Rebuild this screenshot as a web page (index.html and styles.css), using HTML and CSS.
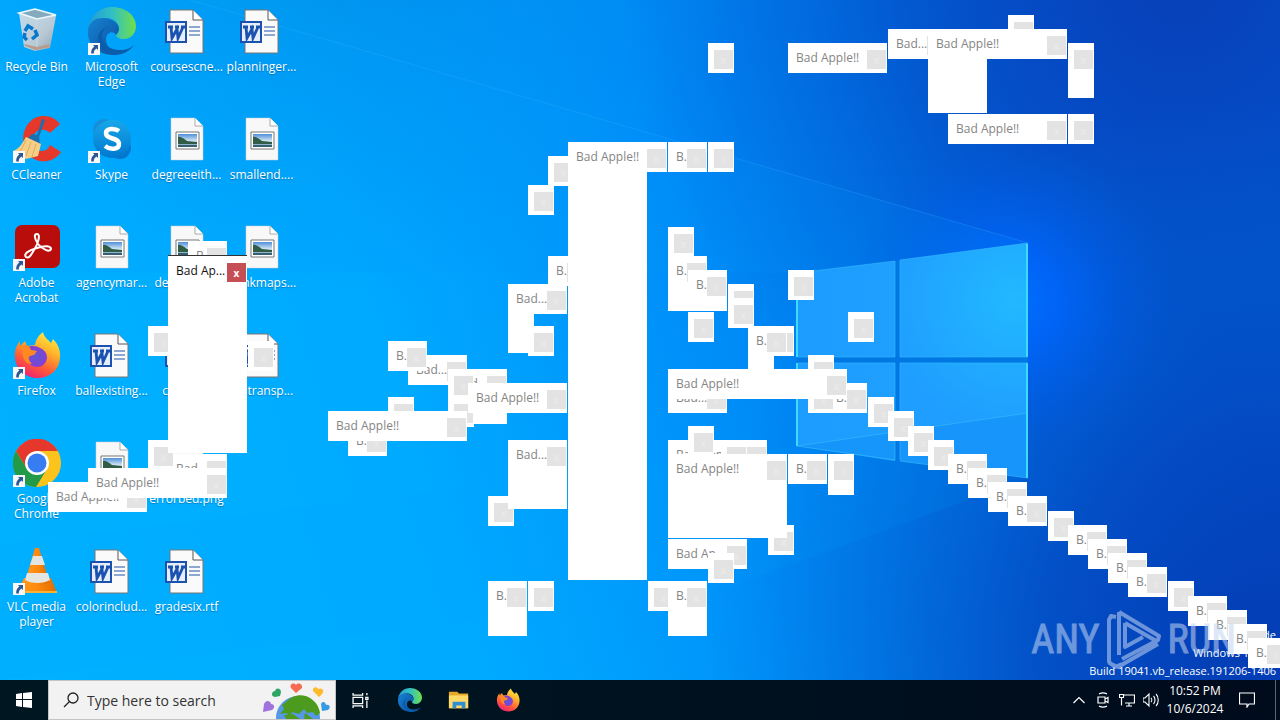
FILE: index.html
```html
<!DOCTYPE html>
<html lang="en">
<head>
<meta charset="utf-8">
<title>Desktop</title>
<link rel="stylesheet" href="styles.css">
</head>
<body>
<svg class="defs" aria-hidden="true">
  <defs>
    <linearGradient id="edgeTop" x1="0" y1="0" x2="1" y2="0"><stop offset="0" stop-color="#229bd8"/><stop offset=".5" stop-color="#31bfc4"/><stop offset="1" stop-color="#70e04a"/></linearGradient>
    <linearGradient id="edgeMid" x1="0" y1="0" x2="1" y2="1"><stop offset="0" stop-color="#1583d2"/><stop offset="1" stop-color="#0c4f9f"/></linearGradient>
    <linearGradient id="ffBody" x1=".8" y1="0" x2=".3" y2="1"><stop offset="0" stop-color="#fff04a"/><stop offset=".35" stop-color="#ffb52a"/><stop offset=".7" stop-color="#ff5b36"/><stop offset="1" stop-color="#ee1f79"/></linearGradient>
    <radialGradient id="ffCore"><stop offset="0" stop-color="#5a58d8"/><stop offset="1" stop-color="#8a3ed0"/></radialGradient>
    <linearGradient id="skypeBody" x1="0" y1="0" x2="0" y2="1"><stop offset="0" stop-color="#18a7e8"/><stop offset="1" stop-color="#0078d0"/></linearGradient>
    <linearGradient id="binBody" x1="0" y1="0" x2="1" y2="1"><stop offset="0" stop-color="#c4dcea"/><stop offset=".6" stop-color="#b9cad6"/><stop offset="1" stop-color="#8fa3b2"/></linearGradient>
    <linearGradient id="coneBody" x1="0" y1="0" x2="1" y2="0"><stop offset="0" stop-color="#ff9a1c"/><stop offset=".5" stop-color="#ff8a10"/><stop offset="1" stop-color="#dd6a00"/></linearGradient>
    <linearGradient id="photoSky" x1="0" y1="0" x2="0" y2="1"><stop offset="0" stop-color="#4f8fd8"/><stop offset=".55" stop-color="#d6e8f4"/><stop offset="1" stop-color="#5c8fa8"/></linearGradient>
  </defs>
  <symbol id="shortcut" viewBox="0 0 12 12"><path d="M0 0h12v12H0z" fill="#f8f8f8"/><path d="M5 2h5v5L8.600 5.600C6.500 6.800 5.800 8 5.800 10.500H3.200C3 7.500 4 5 6.400 3.500z" fill="#2c5797"/></symbol>
  <symbol id="bin" viewBox="0 0 48 48"><path d="M6 6l5 34 11 4 15-3 6-32z" fill="url(#binBody)"/><path d="M6 6l16-4 21 6-19 4z" fill="#84aabd" stroke="#eff8fc" stroke-width="1.500"/><path d="M24 12v31" stroke="#c9d8e1"/><path d="M12 39l11 4 14-3-1-3-12 3-13-3z" fill="#b99b8e"/><g fill="none" stroke="#0878cc" stroke-width="3.500"><path d="M12 24l3-5 5 3M22 23l2 5-5 4M14 33l-3-3 1-4"/></g></symbol>
  <symbol id="edge" viewBox="0 0 48 48"><path d="M0 20C3 8 12 0 24 0c14 0 24 9 24 19 0 7-5 13-12 13-5 0-8-2-8-4 0-1 3-3 3-7 0-5-5-10-13-10-8 0-15 3-18 9z" fill="url(#edgeTop)"/><path d="M0 22c2-8 8-11 15-11 10 0 16 6 16 11 0 3-2 5-3 6-2-5-10-3-10 4 0 8 6 13 13 15C14 51-2 39 0 22z" fill="url(#edgeMid)"/><path d="M14 29c0 8 8 14 18 14 6 0 11-2 14-5-4 6-11 10-20 10-9-2-17-9-16-17 0-6 5-10 12-12-5 2-8 5-8 10z" fill="#0b5cab"/></symbol>
  <symbol id="word" viewBox="4 0 48 48"><path d="M11 3h23l10 10v33H11z" fill="#fafafa" stroke="#777" stroke-width="1"/><path d="M34 3v10h10" fill="#fff" stroke="#555"/><path d="M30 20h11M30 24h11M30 28h11" stroke="#1f55a8" stroke-width="1.200"/><path d="M7 15h20v20H7z" fill="#e7eefb" stroke="#1b52b0" stroke-width="2"/><path d="M9 20h5M16 20h4M22 20h4M12 20l1 11 5-9 1 9 5-11" fill="none" stroke="#1b52b0" stroke-width="2.800"/></symbol>
  <symbol id="photo" viewBox="4 0 48 48"><path d="M12 3h24l8 8v34H12z" fill="#f8f8f8" stroke="#ccc" stroke-width=".500"/><path d="M36 3v8h8" fill="#fff" stroke="#aaa"/><path d="M17 17h23v17H17z" fill="#fff" stroke="#777"/><path d="M19 19h19v13H19z" fill="url(#photoSky)"/><path d="M19 22c3-1 6 2 9 4l10 1v2H19z" fill="#315d46"/><path d="M19 30h19v2H19z" fill="#385e73"/></symbol>
  <symbol id="ccleaner" viewBox="0 0 48 48"><path d="M47 9L37 18c-6-6-15-3-17 4-2 8 2 14 9 14 4 0 7-3 8-6l11 7C41 48 24 50 15 39 4 23 13 1 31 1c7 0 12 3 16 8z" fill="#e6372b"/><path d="M29 4l3 1-6 17 1 7-14-4 6-6 5 1z" fill="#1e6fae"/><path d="M13 22l15 7-3 12-12 3L0 36c6-2 9-7 13-14z" fill="#f5cf86"/><path d="M13 25L7 37m11-10l-5 14m10-12l-4 13" stroke="#e2aa5c"/></symbol>
  <symbol id="skype" viewBox="0 0 48 48"><circle cx="16" cy="15" r="11" fill="#168fd8"/><circle cx="32" cy="33" r="11" fill="#0577ce"/><circle cx="24" cy="24" r="19" fill="url(#skypeBody)"/><path d="M31 16c-4-3-13-3-13 2 0 7 13 4 13 11 0 6-9 6-14 2" fill="none" stroke="#fff" stroke-width="4.500"/></symbol>
  <symbol id="acrobat" viewBox="0 0 48 48"><rect x="2" y="2" width="45" height="43" rx="7" fill="#b80d0b"/><path d="M13 34c-3-3 3-7 11-9 8-3 14-2 14 1-1 4-9 0-13-5-4-6-4-10-1-10 4 0 1 10-3 16-3 5-5 9-8 7z" fill="none" stroke="#fff" stroke-width="2"/></symbol>
  <symbol id="firefox" viewBox="0 0 48 48"><path d="M30 1c1 6 6 8 8 11l2-4c5 5 8 12 7 19-1 12-10 20-22 20S3 39 2 27C1 19 4 14 7 10v5l5-5 2 5 8-1c1-6 4-10 8-13z" fill="url(#ffBody)"/><path d="M13 17c5-3 11-2 14 0 5 2 7 6 7 10-1 6-5 9-10 9-6 0-10-5-9-10l8-3z" fill="url(#ffCore)"/><path d="M7 15c6-2 10 0 11 4l6 1c-1 3-7 3-8 6-1 2 1 5 3 7-8 0-10-8-9-13z" fill="#ff8a22"/></symbol>
  <symbol id="chrome" viewBox="0 0 48 48"><circle cx="24" cy="24" r="24" fill="#fcc31c"/><path d="M3 12a24 24 0 0 1 42 0H24L14 30z" fill="#e5372b"/><path d="M3 12a24 24 0 0 0 20 36l11-18-10 6-10-6z" fill="#229a48"/><circle cx="24" cy="24" r="12" fill="#fff"/><circle cx="24" cy="24" r="9.500" fill="#377cf0"/></symbol>
  <symbol id="vlc" viewBox="0 0 48 48"><path d="M11 31h27l6 15H4z" fill="url(#coneBody)"/><path d="M4 44h40v2H4z" fill="#ffb233"/><path d="M22 1h4l10 34c-6 5-18 5-24 0z" fill="url(#coneBody)"/><path d="M20 9h9l3 9H17zM14 26h21l2 7c-6 4-19 4-25 0z" fill="#e4e4e0"/></symbol>
  <symbol id="folder" viewBox="0 0 24 24"><path d="M1 3h9l2 2h10v16H1z" fill="#e7a827"/><path d="M1 7h21v14H1z" fill="#ffda69"/><path d="M5 14h14v7h-4v-3H9v3H5z" fill="#328ed2"/></symbol>
</svg>

<main class="desktop">
  <svg class="wallpaper" viewBox="0 0 1280 680" preserveAspectRatio="xMidYMid slice" aria-hidden="true">
    <defs>
      <linearGradient id="base" x1="0" y1="620" x2="1180" y2="240" gradientUnits="userSpaceOnUse"><stop offset="0" stop-color="#00b2ff"/><stop offset=".36" stop-color="#00aaff"/><stop offset=".58" stop-color="#0092fa"/><stop offset=".78" stop-color="#0078ec"/><stop offset="1" stop-color="#004bcc"/></linearGradient>
      <radialGradient id="glow" gradientUnits="userSpaceOnUse" cx="1010" cy="300" r="160"><stop offset="0" stop-color="#0070ff"/><stop offset=".3" stop-color="#0066ff" stop-opacity=".8"/><stop offset="1" stop-color="#0058e0" stop-opacity="0"/></radialGradient>
      <radialGradient id="shadeTop" gradientUnits="userSpaceOnUse" cx="1180" cy="-20" r="560"><stop offset="0" stop-color="#0840b8"/><stop offset=".4" stop-color="#054cc4" stop-opacity=".75"/><stop offset="1" stop-color="#0060d4" stop-opacity="0"/></radialGradient>
      <radialGradient id="shadeBottom" gradientUnits="userSpaceOnUse" cx="1260" cy="660" r="560"><stop offset="0" stop-color="#033cb4"/><stop offset=".4" stop-color="#0448bf" stop-opacity=".8"/><stop offset="1" stop-color="#0068d4" stop-opacity="0"/></radialGradient>
      <radialGradient id="shadeLeft" gradientUnits="userSpaceOnUse" cx="330" cy="-140" r="440"><stop offset="0" stop-color="#0087e0" stop-opacity=".8"/><stop offset="1" stop-color="#0090ee" stop-opacity="0"/></radialGradient>
      <linearGradient id="pane" x1="0" y1="0" x2="1" y2="0"><stop offset="0" stop-color="#1c9cff"/><stop offset="1" stop-color="#1fa0ff"/></linearGradient>
      <radialGradient id="paneShine" gradientUnits="userSpaceOnUse" cx="1015" cy="300" r="130"><stop offset="0" stop-color="#22b8ff"/><stop offset="1" stop-color="#1f9eff"/></radialGradient>
    </defs>
    <path d="M0 0h1280v680H0z" fill="url(#base)"/>
    <path d="M0 0h1280v680H0z" fill="url(#shadeLeft)"/>
    <path d="M0 0h1280v680H0z" fill="url(#shadeTop)"/>
    <path d="M0 0h1280v680H0z" fill="url(#shadeBottom)"/>
    <path d="M0 0h1280v680H0z" fill="url(#glow)"/>
    <path d="M190 0L1028 243 797 273 0 273V0z" fill="#009cff" opacity=".12"/>
    <path d="M190 0L1028 243" stroke="#42b6ff" opacity=".25"/>
    <path d="M0 545L797 446l231 32-300 110L0 680z" fill="#00a2ff" opacity=".12"/>
    <path d="M797 273l98-12v96h-98zM797 363h98v98l-98-15z" fill="url(#pane)"/>
    <path d="M900 260l128-17v114H900zM900 363h128v115l-128-17z" fill="url(#paneShine)"/>
    <path d="M895 261l5-1v97h128v6H900v98l-5-1v-97h-98v-6h98z" fill="#0078e4"/>
    <path d="M797 446l98-14v28zM900 431l128-18v65l-128-17z" fill="#0a84f0" opacity=".35"/>
    <path d="M797 446l231-33" stroke="#3bbcff" opacity=".6"/>
    <path d="M797 274v83M797 363v83M1027 244v113M1027 363v115" fill="none" stroke="#3bdcff" stroke-width="2"/>
    <path d="M797 273l98-12M900 260l128-17M797 446l98 14M900 461l128 17M797 357h98M900 357h128M797 363h98M900 363h128M895 261v96M900 260v97M895 363v97M900 363v97" fill="none" stroke="#35bcff" opacity=".6"/>
  </svg>

  <nav class="icons" aria-label="Desktop icons">
    <button class="icon"><svg class="art"><use href="#bin"/></svg><span>Recycle Bin</span></button>
    <button class="icon"><svg class="art"><use href="#ccleaner"/></svg><svg class="link"><use href="#shortcut"/></svg><span>CCleaner</span></button>
    <button class="icon"><svg class="art"><use href="#acrobat"/></svg><svg class="link"><use href="#shortcut"/></svg><span>Adobe<br>Acrobat</span></button>
    <button class="icon"><svg class="art"><use href="#firefox"/></svg><svg class="link"><use href="#shortcut"/></svg><span>Firefox</span></button>
    <button class="icon"><svg class="art"><use href="#chrome"/></svg><svg class="link"><use href="#shortcut"/></svg><span>Google<br>Chrome</span></button>
    <button class="icon"><svg class="art"><use href="#vlc"/></svg><svg class="link"><use href="#shortcut"/></svg><span>VLC media<br>player</span></button>
    <button class="icon"><svg class="art"><use href="#edge"/></svg><svg class="link"><use href="#shortcut"/></svg><span>Microsoft<br>Edge</span></button>
    <button class="icon"><svg class="art"><use href="#skype"/></svg><svg class="link"><use href="#shortcut"/></svg><span>Skype</span></button>
    <button class="icon"><svg class="art"><use href="#photo"/></svg><span>agencymar...</span></button>
    <button class="icon"><svg class="art"><use href="#word"/></svg><span>ballexisting...</span></button>
    <button class="icon" aria-label="Image file"><svg class="art"><use href="#photo"/></svg></button>
    <button class="icon"><svg class="art"><use href="#word"/></svg><span>colorinclud...</span></button>
    <button class="icon"><svg class="art"><use href="#word"/></svg><span>coursescne...</span></button>
    <button class="icon"><svg class="art"><use href="#photo"/></svg><span>degreeeith...</span></button>
    <button class="icon"><svg class="art"><use href="#photo"/></svg><span>designma...</span></button>
    <button class="icon"><svg class="art"><use href="#word"/></svg><span>coren.rtf</span></button>
    <button class="icon"><svg class="art"><use href="#photo"/></svg><span>errorbed.png</span></button>
    <button class="icon"><svg class="art"><use href="#word"/></svg><span>gradesix.rtf</span></button>
    <button class="icon"><svg class="art"><use href="#word"/></svg><span>planninger...</span></button>
    <button class="icon"><svg class="art"><use href="#photo"/></svg><span>smallend....</span></button>
    <button class="icon"><svg class="art"><use href="#photo"/></svg><span>drinkmaps...</span></button>
    <button class="icon"><svg class="art"><use href="#word"/></svg><span>railtransp...</span></button>
  </nav>

  <p class="build">Test Mode<br>Windows 10 Pro<br>Build 19041.vb_release.191206-1406</p>

  <div class="windows" id="windows"></div>

  <div class="watermark">
    <span>ANY</span>
    <svg viewBox="0 0 56 62" aria-hidden="true"><path d="M10 8L5 7 3 11v42l6 5 7-3M13 3v43M13 3l40 24-1 4L16 50M13 3v43M3 54l9 4 40-23M19 14v24l18-10M19 14l33 19" fill="none" stroke="currentColor" stroke-width="4" stroke-linejoin="round"/></svg>
    <span>RUN</span>
  </div>
</main>

<footer class="taskbar">
  <button class="start" aria-label="Start"><svg viewBox="0 0 16 16"><path d="M0 2l6-1v6H0zM7 1l9-1v7H7zM0 8h6v7l-6-1zM7 8h9v8l-9-1z" fill="#fff"/></svg></button>
  <label class="search">
    <svg class="glass" viewBox="0 0 16 16"><circle cx="10" cy="6" r="5" fill="none" stroke="#222" stroke-width="1.300"/><path d="M6.500 9.500L1 15" stroke="#222" stroke-width="1.300"/></svg>
    <input type="text" placeholder="Type here to search" aria-label="Type here to search">
    <svg class="earth" viewBox="0 0 70 38">
      <circle cx="36" cy="37" r="22" fill="#5598e8"/>
      <path d="M25 20c5-6 16-8 23-3 5 3 9 8 10 15l-4 3-3-4-6 1-3-4-5 5-7-2-2 4-4-3-6 1 4-5-2-4zM22 34l9-1 7 5H24zM43 32l8 6h-9z" fill="#4c9b1f"/>
      <path d="M34 12l-5-5c-2-4 3-6 5-3 2-3 7-1 6 3z" fill="#f56c52"/>
      <path d="M57 16l-6-6c-1-4 4-5 5-2 4-2 7 2 4 5z" fill="#fdbb2d"/>
      <path d="M18 15l-5 1c-5-1-3-6 0-6 1-4 6-3 6 1z" fill="#2fa565"/>
      <path d="M1 31l1-8c2-5 7-3 7 0 4 0 4 4 1 6z" fill="#9f72dd"/>
      <path d="M60 30l-1-7c2-4 5-1 5 1 4-1 5 3 2 5z" fill="#379be4"/>
    </svg>
  </label>
  <button class="app" aria-label="Task View"><svg class="small" viewBox="0 0 16 16"><path d="M1 1v2h9V1M1 15v-2h9v2M1 5h9v6H1zM14 1v2M14 8v7M13 5h2v2h-2z" fill="none" stroke="#fff" stroke-width="1.200"/></svg></button>
  <button class="app" aria-label="Microsoft Edge"><svg><use href="#edge"/></svg></button>
  <button class="app" aria-label="File Explorer"><svg class="mid"><use href="#folder"/></svg></button>
  <button class="app" aria-label="Firefox"><svg><use href="#firefox"/></svg></button>
  <div class="tray">
    <button aria-label="Show hidden icons"><svg viewBox="0 0 16 16"><path d="M2.500 11L8 5.500l5.500 5.500" fill="none" stroke="#fff" stroke-width="1.200"/></svg></button>
    <button aria-label="Meet Now"><svg viewBox="0 0 16 16"><path d="M3 5h7v6H3zM10 7l3-1.500v5L10 9M4 2c3-1.800 5-1.800 8 0M4 14c3 1.800 5 1.800 8 0" fill="none" stroke="#fff" stroke-width="1.200"/></svg></button>
    <button aria-label="Network"><svg viewBox="0 0 16 16"><path d="M4 3h11.500v8H6M10 11v3M7 14h6M.500 2.500h4v3h-4zM2.500 5.500v8" fill="none" stroke="#fff" stroke-width="1.200"/></svg></button>
    <button aria-label="Volume"><svg viewBox="0 0 16 16"><path d="M0 6h2l4-4v12l-4-4H0zM8 6c1 1 1 3 0 4M10.500 4c2 2 2 6 0 8M13 2c3 3 3 9 0 12" fill="none" stroke="#fff" stroke-width="1.100"/></svg></button>
    <time class="clock">10:52 PM<br>10/6/2024</time>
    <button class="notes" aria-label="Notifications"><svg viewBox="0 0 16 16"><path d="M.500 1h15v11H10l-2 3v-3H.500z" fill="none" stroke="#fff" stroke-width="1.200"/></svg></button>
  </div>
</footer>
<script src="windows.js"></script>
</body>
</html>
```
FILE: styles.css
```css
* { box-sizing: border-box; }

body {
  margin: 0;
  height: 100vh;
  display: flex;
  flex-direction: column;
  overflow: hidden;
  font-family: "Open Sans", "Noto Sans", sans-serif;
  font-size: 12px;
}

button {
  border: 0;
  padding: 0;
  background: none;
  color: inherit;
  font: inherit;
}

.defs { position: absolute; width: 0; height: 0; }

.desktop {
  position: relative;
  flex: 1;
  min-height: 0;
  overflow: hidden;
  background: #00a8ff;
}

.wallpaper { position: absolute; width: 100%; height: 100%; }

.icons {
  position: relative;
  display: grid;
  grid-auto-flow: column;
  grid-template-rows: repeat(6, 108px);
  grid-auto-columns: 75px;
  margin-left: -1px;
}

.icon {
  position: relative;
  display: flex;
  flex-direction: column;
  align-items: center;
  padding-top: 7px;
  gap: 4px;
  color: #fff;
  line-height: 15px;
  font-size: 12px;
  white-space: nowrap;
  text-shadow: 0 1px 1px rgba(0, 40, 90, .4);
}

.icon .art { width: 48px; height: 48px; }
.icon .link { position: absolute; left: 14px; top: 43px; width: 12px; height: 12px; }

.build {
  position: absolute;
  right: 4px;
  bottom: 0;
  margin: 0;
  color: #fff;
  font-size: 11px;
  line-height: 18px;
  text-align: right;
}

.windows { position: absolute; inset: 0; }

.window {
  position: absolute;
  background: #fff;
  overflow: hidden;
}

.window .caption {
  position: absolute;
  left: 8px;
  top: 6px;
  font-size: 12px;
  line-height: 18px;
  color: #858585;
  white-space: nowrap;
}

.window .close {
  position: absolute;
  right: 1px;
  top: 7px;
  width: 19px;
  height: 19px;
  background: #e3e3e3;
  color: #e9e9e9;
  font-size: 10px;
  font-weight: 700;
  line-height: 18px;
}

.window.active { border-top: 1px solid #333; }
.window.active .caption { color: #111; }
.window.active .close { background: #c64f55; color: #fff; }

.watermark {
  position: absolute;
  right: 44px;
  bottom: 9px;
  display: flex;
  align-items: center;
  gap: 6px;
  color: #c3d5f2;
  opacity: .55;
  font-family: "Liberation Sans Narrow", "Roboto Condensed", "Liberation Sans", sans-serif;
  font-size: 40px;
  line-height: 62px;
  -webkit-text-stroke: 1px currentColor;
}

.watermark svg { width: 56px; height: 62px; }

.taskbar {
  display: flex;
  height: 40px;
  background: linear-gradient(90deg, #001722, #00121f 50%, #000b1c);
  color: #fff;
}

.taskbar button { display: flex; align-items: center; justify-content: center; }

.start { width: 48px; }
.start svg { width: 16px; height: 16px; }

.search {
  display: flex;
  align-items: center;
  width: 288px;
  padding-left: 14px;
  background: #f2f2f2;
  border: 1px solid #c4c4c4;
}

.search .glass { width: 16px; height: 16px; }

.search input {
  flex: 1;
  min-width: 0;
  border: 0;
  padding: 0 0 0 8px;
  background: none;
  font: inherit;
  font-size: 14px;
  outline: 0;
}

.search input::placeholder { color: #333; opacity: 1; }
.search .earth { width: 76px; height: 38px; }

.app { width: 49px; }
.app svg { width: 24px; height: 24px; }
.app .mid { width: 22px; height: 22px; }
.app .small { width: 17px; height: 17px; }

.tray {
  display: flex;
  margin-left: auto;
  margin-right: 4px;
  border-right: 1px solid #5a6470;
}

.tray button { width: 24px; }
.tray svg { width: 16px; height: 16px; }

.clock {
  width: 64px;
  padding-top: 2px;
  font-size: 12px;
  line-height: 18px;
  text-align: center;
}

.tray .notes { width: 48px; padding-right: 8px; }
```
FILE: windows.js
```js
// x, y, width, height, caption, active; listed from back to front
const FULL = "Bad Apple!!";
const windows = [
  [148, 326, 26, 30], [188, 241, 39, 30, "B."], [248, 341, 26, 30],
  [168, 454, 59, 30, "Bad..."], [148, 440, 26, 30],
  [48, 482, 99, 30, FULL], [88, 468, 139, 30, FULL],
  [168, 255, 79, 198, "Bad Ap...", true],

  [408, 355, 59, 30, "Bad..."], [388, 341, 39, 30, "B."],
  [448, 369, 59, 55, "Bad..."], [448, 369, 26, 30], [448, 397, 26, 30],
  [468, 383, 99, 30, FULL], [388, 397, 26, 30], [348, 426, 39, 30, "B."],
  [328, 411, 139, 30, FULL], [488, 496, 26, 30], [508, 440, 59, 69, "Bad..."],

  [508, 284, 26, 69], [508, 284, 59, 30, "Bad..."], [528, 326, 26, 30],
  [528, 185, 26, 30], [548, 156, 26, 30], [548, 256, 39, 30, "B."],
  [568, 142, 79, 438], [568, 142, 99, 30, FULL],
  [668, 142, 39, 30, "B."], [708, 142, 26, 30],

  [668, 227, 26, 30], [668, 256, 39, 55, "B."], [688, 270, 39, 41, "B."],
  [688, 312, 26, 30], [728, 284, 26, 30], [728, 298, 26, 30],
  [788, 270, 26, 30], [848, 312, 26, 30],
  [748, 326, 26, 55], [768, 326, 26, 30], [748, 326, 39, 30, "B."],
  [808, 355, 26, 30], [668, 383, 59, 30, "Bad..."],
  [828, 383, 39, 30, "B."], [808, 383, 26, 30], [668, 369, 179, 30, FULL],

  [868, 397, 26, 30], [888, 411, 26, 30], [908, 426, 26, 30], [928, 440, 26, 30],
  [948, 454, 39, 30, "B."], [968, 468, 39, 30, "B."], [988, 482, 39, 30, "B."],
  [1008, 496, 39, 30, "B."], [1048, 511, 26, 30], [1068, 525, 39, 30, "B."],
  [1088, 539, 39, 30, "B."], [1108, 553, 39, 30, "B."], [1128, 567, 39, 30, "B."],
  [1168, 581, 26, 30], [1188, 596, 39, 30, "B."], [1208, 610, 39, 30, "B."],
  [1228, 624, 39, 30, "B."], [1248, 638, 39, 30, "B."],

  [668, 440, 99, 30, FULL], [721, 440, 26, 30], [688, 426, 26, 30],
  [768, 525, 26, 30], [668, 454, 119, 84, FULL],
  [788, 454, 39, 30, "B."], [828, 454, 26, 41],
  [668, 539, 79, 30, "Bad Ap..."], [708, 553, 26, 30],
  [488, 581, 39, 55, "B."], [528, 581, 26, 30],
  [648, 581, 26, 30], [668, 581, 39, 55, "B."],

  [708, 43, 26, 30], [788, 43, 99, 30, FULL], [888, 29, 59, 30, "Bad..."],
  [928, 29, 59, 84], [1008, 15, 26, 30], [928, 29, 139, 30, FULL],
  [1068, 43, 26, 55], [948, 114, 119, 30, FULL], [1068, 114, 26, 30]
];

const layer = document.getElementById("windows");
for (const [x, y, width, height, caption, active] of windows) {
  const frame = document.createElement("section");
  frame.className = active ? "window active" : "window";
  frame.style.left = `${x}px`;
  frame.style.top = `${y}px`;
  frame.style.width = `${width}px`;
  frame.style.height = `${height}px`;
  if (caption) {
    const title = document.createElement("span");
    title.className = "caption";
    title.textContent = caption;
    frame.append(title);
  }
  const close = document.createElement("button");
  close.className = "close";
  close.textContent = "x";
  close.setAttribute("aria-label", "Close");
  frame.append(close);
  layer.append(frame);
}
```
